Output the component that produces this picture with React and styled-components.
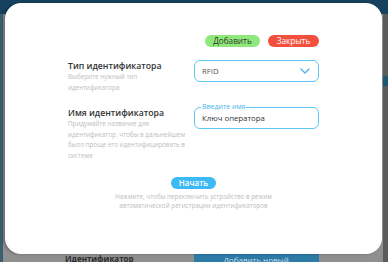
import React from "react";
import styled, { createGlobalStyle } from "styled-components";

const Global = createGlobalStyle`
  html, body { margin: 0; padding: 0; }
  body {
    width: 388px; height: 262px; overflow: hidden;
    background: #8e8e8e;
    font-family: "Open Sans", "Noto Sans", sans-serif;
  }
`;

const Page = styled.div`
  position: relative;
  width: 388px;
  height: 262px;
  overflow: hidden;
  background: #8f8f8f;
  display: flex;
  flex-direction: column;
`;

const Header = styled.div`
  height: 14px;
  background: #17425f;
  flex: none;
`;

const PageBody = styled.div`
  flex: 1;
  display: flex;
  border-left: 3px solid #3d5d70;
`;

const PageMain = styled.div`
  flex: 1;
  display: flex;
  align-items: flex-end;
  gap: 60px;
  padding-left: 62px;
`;

const PageRight = styled.div`
  width: 5px;
  background: #5b5b5b;
  display: flex;
  flex-direction: column;
  padding-top: 62px;
`;

const RightBlue = styled.div`
  height: 10px;
  background: #1e5675;
`;

const BgLabel = styled.div`
  font-size: 8px;
  line-height: 10px;
  font-weight: 700;
  color: #2c2c2c;
  margin-bottom: -2px;
`;

const BgButton = styled.div`
  width: 125px;
  height: 8px;
  background: #2c7aa6;
  color: #c9dbe6;
  font-size: 8px;
  line-height: 12px;
  text-align: center;
  overflow: hidden;
`;

const Overlay = styled.div`
  position: absolute;
  inset: 0;
  padding: 3px 6px 8px 5px;
  display: flex;
`;

const Modal = styled.div`
  flex: 1;
  background: #ffffff;
  border-radius: 16px;
  box-shadow: -2px 0 3px rgba(0, 0, 0, 0.25);
  padding-top: 32px;
  display: flex;
  flex-direction: column;
  align-items: center;
`;

const Content = styled.div`
  width: 251px;
  display: flex;
  flex-direction: column;
`;

const Actions = styled.div`
  display: flex;
  justify-content: flex-end;
  gap: 8px;
  margin-bottom: 13px;
`;

const Pill = styled.button`
  height: 12px;
  width: ${(p) => p.$w}px;
  border: none;
  border-radius: 6px;
  padding: 0;
  font-family: inherit;
  font-size: 8.2px;
  line-height: 12px;
  font-weight: 500;
  background: ${(p) => p.$bg};
  color: ${(p) => p.$fg};
  text-align: center;
`;

const Row = styled.div`
  display: grid;
  grid-template-columns: minmax(0, 1fr) 125px;
  column-gap: 11px;
  margin-bottom: ${(p) => p.$mb}px;
`;

const LabelCol = styled.div`
  display: flex;
  flex-direction: column;
  min-width: 0;
`;

const Title = styled.div`
  font-size: 8.7px;
  line-height: 12px;
  font-weight: 600;
  color: #333333;
`;

const Desc = styled.div`
  font-size: 6.3px;
  line-height: 10.5px;
  color: #bdbdbd;
  white-space: nowrap;
`;

const Field = styled.div`
  position: relative;
  height: 22px;
  border: 1.5px solid #5cc6f7;
  border-radius: 6px;
  box-sizing: border-box;
  display: flex;
  align-items: center;
  justify-content: space-between;
  padding: 0 8px 0 7px;
`;

const FieldText = styled.span`
  font-size: ${(p) => p.$size}px;
  color: ${(p) => p.$color};
`;

const Legend = styled.span`
  position: absolute;
  top: -6px;
  left: 6px;
  padding: 0 1px;
  background: #ffffff;
  font-size: 7px;
  line-height: 9px;
  color: #49b6ef;
`;

const StartWrap = styled.div`
  display: flex;
  flex-direction: column;
  align-items: center;
  gap: 3px;
`;

const StartButton = styled.button`
  width: 45px;
  height: 12px;
  border: none;
  border-radius: 6px;
  padding: 0;
  background: #3db9f4;
  color: #ffffff;
  font-family: inherit;
  font-size: 8px;
  line-height: 12px;
  font-weight: 600;
`;

const Hint = styled.div`
  font-size: 6.3px;
  line-height: 9px;
  color: #bdbdbd;
  text-align: center;
`;

export default function App() {
  return (
    <>
      <Global />
      <Page>
        <Header />
        <PageBody>
          <PageMain>
            <BgLabel>Идентификатор</BgLabel>
            <BgButton>Добавить новый</BgButton>
          </PageMain>
          <PageRight>
            <RightBlue />
          </PageRight>
        </PageBody>
        <Overlay>
          <Modal>
            <Content>
              <Actions>
                <Pill $w={55} $bg="#8ee87b" $fg="#2f3a2c">Добавить</Pill>
                <Pill $w={51} $bg="#f44f3e" $fg="#ffffff">Закрыть</Pill>
              </Actions>
              <Row $mb={14}>
                <LabelCol>
                  <Title>Тип идентификатора</Title>
                  <Desc>Выберите нужный тип<br />идентификатора</Desc>
                </LabelCol>
                <Field>
                  <FieldText $size={7.8} $color="#555555">RFID</FieldText>
                  <svg width="10" height="6" viewBox="0 0 10 6">
                    <polyline points="1,1 5,5 9,1" fill="none" stroke="#3fb3ee" strokeWidth="1.2" strokeLinecap="round" strokeLinejoin="round" />
                  </svg>
                </Field>
              </Row>
              <Row $mb={16}>
                <LabelCol>
                  <Title>Имя идентификатора</Title>
                  <Desc>Придумайте название для<br />идентификатор, чтобы в дальнейшем<br />было проще его идентифицировать в<br />системе</Desc>
                </LabelCol>
                <Field>
                  <Legend>Введите имя</Legend>
                  <FieldText $size={7.8} $color="#333333">Ключ оператора</FieldText>
                </Field>
              </Row>
              <StartWrap>
                <StartButton>Начать</StartButton>
                <Hint>Нажмите, чтобы переключить устройство в режим<br />автоматической регистрации идентификаторов</Hint>
              </StartWrap>
            </Content>
          </Modal>
        </Overlay>
      </Page>
    </>
  );
}
